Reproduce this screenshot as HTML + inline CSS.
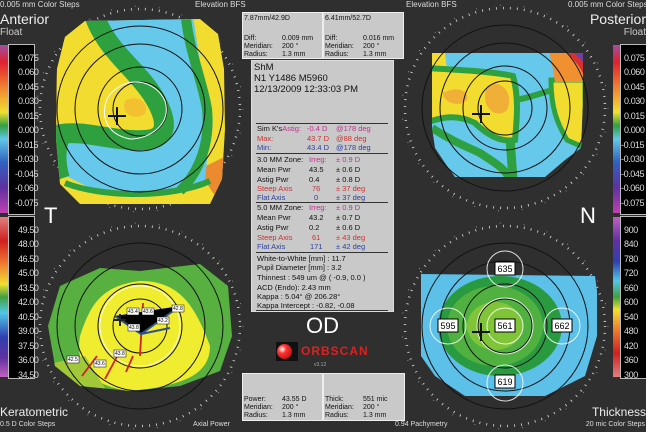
<!DOCTYPE html>
<html><head><meta charset="utf-8"><style>
body{margin:0;width:646px;height:432px;background:#2f2f2f;overflow:hidden;position:relative;font-family:"Liberation Sans",sans-serif;color:#fff}
.a{position:absolute;white-space:nowrap}
.box{position:absolute;background:#c9c9c9;border:1px solid #eee;color:#111;font-size:7px;line-height:8px}
.p{position:absolute;background:#c9c9c9;border:1px solid #ddd;color:#111}
.bar{position:absolute;background:#000;border:1px solid #bbb;font-size:9px;color:#ddd;letter-spacing:-0.4px}
.bar div{position:absolute;left:9px}
.r{color:#d03030}.b{color:#3040a0}.m{color:#c03090}
</style></head><body>
<svg width="646" height="432" style="position:absolute;left:0;top:0">
<defs>
<g id="ring" fill="none">
<circle r="100" stroke="#ddd" stroke-width="2.5" stroke-dasharray="0.8 6.2"/>
<circle r="103" stroke="#eee" stroke-width="1" stroke-dasharray="0.8 23.2" opacity=".6"/>
</g>
<g id="inner" fill="none" stroke="#111" stroke-width="1">
<circle r="27"/><circle r="42"/><circle r="65"/><circle r="83"/>
</g>
<clipPath id="c1"><path d="M-75,-72 L-55,-88 L60,-90 L78,-75 L84,-40 L85,20 L82,70 L70,95 L-60,95 L-80,75 L-84,30 L-83,-40 Z"/></clipPath>
<clipPath id="c2"><path d="M-73,-55 L78,-55 L78,-10 L76,40 L60,52 L40,69 L-50,69 L-60,55 L-70,40 L-73,20 Z"/></clipPath>
<clipPath id="c3"><path d="M-80,-40 L-40,-58 L0,-55 L60,-62 L88,-40 L92,10 L80,45 L40,60 L-10,65 L-60,60 L-85,40 L-92,0 Z"/></clipPath>
<clipPath id="c4"><path d="M-84,-52 L90,-50 L92,-35 L92,10 L80,50 L40,70 L-40,70 L-70,50 L-84,30 Z"/></clipPath>
</defs>
<!-- TL -->
<g transform="translate(140,109)">
<use href="#ring"/>
<g clip-path="url(#c1)">
<rect x="-100" y="-100" width="200" height="200" fill="#f2dc30"/>
<path d="M-90,-80 C-80,-40 -78,0 -90,20 L-100,20 L-100,-80 Z" fill="#f0a030"/>
<path d="M60,60 C70,80 75,95 100,100 L100,40 Z" fill="#ec8a30"/>
<path d="M-52,-100 L52,-100 L70,20 L65,72 L30,84 L-40,84 L-72,68 L-78,20 Z" fill="#66c8ea"/>
<path d="M45,-100 C48,-60 62,-30 67,0 C70,30 62,60 40,82" fill="none" stroke="#2ea040" stroke-width="10"/>
<path d="M-100,-100 L-55,-100 C-45,-60 -10,-40 5,-12 C18,10 18,22 5,24 C-20,26 -55,12 -100,14 Z" fill="#f2dc30"/>
<path d="M-48,-100 C-36,-60 -8,-45 12,-15 C28,10 30,30 5,31 C-25,33 -55,21 -78,25 C-85,35 -85,55 -80,70" fill="none" stroke="#2ea040" stroke-width="20"/>
<path d="M-75,74 C-40,88 30,90 70,72" fill="none" stroke="#2ea040" stroke-width="6"/>
<path d="M-15,-8 C-5,-15 10,-8 5,5 C-5,12 -20,5 -15,-8 Z" fill="#f2c030"/>
</g>
<use href="#inner"/>
<path d="M-32,-12 C-15,-35 15,-30 25,-8 C32,15 10,30 -10,30 C-35,25 -40,5 -32,-12 Z" fill="none" stroke="#fff" stroke-width="1"/>
<path d="M-32,7 h18 M-23,-2 v18" stroke="#111" stroke-width="2"/>
</g>
<!-- TR -->
<g transform="translate(505,108)">
<use href="#ring"/>
<g clip-path="url(#c2)">
<rect x="-100" y="-100" width="200" height="200" fill="#66c8ea"/>
<path d="M-73,-55 L-60,-55 L-58,-38 L-73,-36 Z" fill="#f2dc30"/>
<path d="M-73,20 C-50,35 -35,40 -25,45 C-10,55 0,60 5,72" fill="none" stroke="#2ea040" stroke-width="8"/>
<path d="M5,30 L8,72" fill="none" stroke="#2ea040" stroke-width="9"/>
<path d="M10,-8 C25,-10 35,-15 48,-18" fill="none" stroke="#2ea040" stroke-width="6"/>
<path d="M-80,-40 C-40,-38 -10,-36 8,-32 C14,-10 12,10 10,32 C-5,35 -20,25 -30,15 C-50,5 -65,10 -80,15 Z" fill="#f2dc30" stroke="#2ea040" stroke-width="6"/>
<path d="M-62,-15 C-50,-22 -35,-18 -38,-8 C-45,0 -62,-5 -62,-15 Z" fill="#f0b038"/>
<path d="M-18,-22 C-5,-30 10,-15 2,2 C-8,12 -26,0 -18,-22 Z" fill="#f0b038"/>
<path d="M46,-28 L80,-28 L80,40 L62,32 C52,15 46,0 46,-28 Z" fill="#f2dc30" stroke="#2ea040" stroke-width="5"/>
<path d="M44,-56 L80,-56 L80,-26 L50,-26 C48,-40 46,-50 44,-56 Z" fill="#f09030"/>
<path d="M60,-56 L80,-56 L80,-30 C75,-42 68,-50 60,-56 Z" fill="#d83030"/>
<path d="M68,-56 L80,-56 L80,-44 Z" fill="#7040a0"/>
</g>
<use href="#inner"/>
<path d="M-33,6 h18 M-24,-3 v18" stroke="#111" stroke-width="2"/>
</g>
<!-- BL -->
<g transform="translate(140,326)">
<use href="#ring"/>
<g clip-path="url(#c3)">
<rect x="-100" y="-100" width="200" height="200" fill="#58b040"/>
<path d="M-60,10 C-50,-20 -40,-40 0,-45 C40,-45 55,-20 70,20 C70,50 40,60 -10,65 C-50,60 -65,40 -60,10 Z" fill="#f0ec30"/>
<path d="M-100,40 L-55,30 L-30,70 L-100,70 Z" fill="#a0c838"/>
</g>
<use href="#inner"/>
<circle r="40" fill="none" stroke="#fff" stroke-width="1" opacity=".8"/>
<path d="M3,-23 L0,30 M-43,30 L-58,50 M-20,25 L-35,53 M-7,30 L-14,46" stroke="#d02020" stroke-width="1.8"/>
<path d="M-25,-10 L1,8 L40,-20 M1,8 L30,2" stroke="#305090" stroke-width="2"/>
<path d="M-26,-6 h12 M-20,-12 v12" stroke="#222" stroke-width="2"/>
<g font-size="5" font-family="Liberation Sans" fill="#000">
<rect x="-13" y="-18" width="12" height="7" fill="#fff" stroke="#000" stroke-width=".5"/><text x="-12" y="-13">43.4</text>
<rect x="2" y="-18" width="12" height="7" fill="#fff" stroke="#000" stroke-width=".5"/><text x="3" y="-13">43.6</text>
<rect x="17" y="-9" width="12" height="7" fill="#fff" stroke="#000" stroke-width=".5"/><text x="18" y="-4">43.2</text>
<rect x="32" y="-21" width="12" height="7" fill="#fff" stroke="#000" stroke-width=".5"/><text x="33" y="-16">42.8</text>
<rect x="-12" y="-2" width="12" height="7" fill="#fff" stroke="#000" stroke-width=".5"/><text x="-11" y="3">43.8</text>
<rect x="-26" y="24" width="12" height="7" fill="#fff" stroke="#000" stroke-width=".5"/><text x="-25" y="29">43.8</text>
<rect x="-46" y="34" width="12" height="7" fill="#fff" stroke="#000" stroke-width=".5"/><text x="-45" y="39">43.6</text>
<rect x="-73" y="30" width="12" height="7" fill="#fff" stroke="#000" stroke-width=".5"/><text x="-72" y="35">42.5</text>
</g>
</g>
<!-- BR -->
<g transform="translate(505,326)">
<use href="#ring"/>
<g clip-path="url(#c4)">
<rect x="-100" y="-100" width="200" height="200" fill="#5cc0e8"/>
<ellipse cx="-5" cy="0" rx="62" ry="50" fill="#2a9a40"/>
<ellipse cx="-10" cy="0" rx="48" ry="40" fill="#50b040"/>
<ellipse cx="-10" cy="0" rx="28" ry="24" fill="#80c438"/>
</g>
<use href="#inner"/>
<g fill="none" stroke="#fff" stroke-width="1" opacity=".85">
<circle cx="0" cy="-57" r="18"/><circle cx="-57" cy="0" r="18"/><circle cx="57" cy="0" r="18"/><circle cx="0" cy="57" r="18"/><circle r="18"/><circle r="28"/>
</g>
<path d="M-33,6 h18 M-24,-3 v18" stroke="#111" stroke-width="2"/>
<g font-size="9" font-family="Liberation Sans" fill="#000" text-anchor="middle">
<rect x="-10" y="-64" width="20" height="13" fill="#fff" stroke="#000"/><text x="0" y="-54">635</text>
<rect x="-67" y="-7" width="20" height="13" fill="#fff" stroke="#000"/><text x="-57" y="3">595</text>
<rect x="-10" y="-7" width="20" height="13" fill="#fff" stroke="#000"/><text x="0" y="3">561</text>
<rect x="47" y="-7" width="20" height="13" fill="#fff" stroke="#000"/><text x="57" y="3">662</text>
<rect x="-10" y="49" width="20" height="13" fill="#fff" stroke="#000"/><text x="0" y="59">619</text>
</g>
</g>
<defs>
<linearGradient id="g1" x1="0" y1="0" x2="0" y2="1">
<stop offset="0" stop-color="#a050a0"/><stop offset=".1" stop-color="#e02030"/><stop offset=".25" stop-color="#f08030"/><stop offset=".4" stop-color="#f0e030"/><stop offset=".48" stop-color="#30a040"/><stop offset=".56" stop-color="#60c8e8"/><stop offset=".7" stop-color="#3060c0"/><stop offset=".85" stop-color="#6030a0"/><stop offset="1" stop-color="#c040b0"/>
</linearGradient>
<linearGradient id="g2" x1="0" y1="0" x2="0" y2="1">
<stop offset="0" stop-color="#e08080"/><stop offset=".15" stop-color="#d02020"/><stop offset=".3" stop-color="#f08030"/><stop offset=".42" stop-color="#f0e030"/><stop offset=".5" stop-color="#40a040"/><stop offset=".6" stop-color="#50c8e8"/><stop offset=".75" stop-color="#3040b0"/><stop offset=".88" stop-color="#6030a0"/><stop offset="1" stop-color="#c060c0"/>
</linearGradient>
<linearGradient id="g3" x1="0" y1="0" x2="0" y2="1">
<stop offset="0" stop-color="#c060c0"/><stop offset=".15" stop-color="#6030a0"/><stop offset=".28" stop-color="#3040b0"/><stop offset=".4" stop-color="#50c8e8"/><stop offset=".5" stop-color="#40a040"/><stop offset=".58" stop-color="#f0e030"/><stop offset=".7" stop-color="#f08030"/><stop offset=".85" stop-color="#d02020"/><stop offset="1" stop-color="#e08080"/>
</linearGradient>
</defs>
<rect x="0" y="45" width="8" height="168" fill="url(#g1)"/>
<rect x="0" y="217" width="8" height="160" fill="url(#g2)"/>
<rect x="613" y="45" width="8" height="168" fill="url(#g1)"/>
<rect x="613" y="217" width="8" height="160" fill="url(#g3)"/>
</svg>

<div class="a" style="left:0;top:0;font-size:8px;color:#ddd">0.005 mm Color Steps</div>
<div class="a" style="left:195px;top:0;font-size:8px;color:#ddd">Elevation BFS</div>
<div class="a" style="left:406px;top:0;font-size:8px;color:#ddd">Elevation BFS</div>
<div class="a" style="left:568px;top:0;font-size:8px;color:#ddd">0.005 mm Color Steps</div>
<div class="a" style="left:0;top:11px;font-size:14px;color:#eee">Anterior</div>
<div class="a" style="left:0;top:27px;font-size:10px;color:#ccc">Float</div>
<div class="a" style="right:0;top:11px;font-size:14px;color:#eee">Posterior</div>
<div class="a" style="right:0;top:27px;font-size:10px;color:#ccc">Float</div>
<div class="a" style="left:44px;top:203px;font-size:22px;color:#fff">T</div>
<div class="a" style="left:580px;top:203px;font-size:22px;color:#fff">N</div>
<div class="a" style="left:0;top:405px;font-size:12px;color:#eee">Keratometric</div>
<div class="a" style="left:0;top:421px;font-size:7px;color:#ddd">0.5 D Color Steps</div>
<div class="a" style="left:193px;top:421px;font-size:7px;color:#ddd">Axial Power</div>
<div class="a" style="left:395px;top:421px;font-size:7px;color:#ddd">0.94 Pachymetry</div>
<div class="a" style="right:0;top:405px;font-size:12px;color:#eee">Thickness</div>
<div class="a" style="right:1px;top:421px;font-size:7px;color:#ddd">20 mic Color Steps</div>

<div class="bar" style="left:8px;top:44px;width:25px;height:169px">
<div style="top:8px">0.075</div><div style="top:22px">0.060</div><div style="top:37px">0.045</div><div style="top:51px">0.030</div><div style="top:66px">0.015</div><div style="top:80px">0.000</div><div style="top:95px;left:6px">-0.015</div><div style="top:109px;left:6px">-0.030</div><div style="top:124px;left:6px">-0.045</div><div style="top:138px;left:6px">-0.060</div><div style="top:153px;left:6px">-0.075</div>
</div>
<div class="bar" style="left:8px;top:216px;width:25px;height:161px">
<div style="top:8px">49.50</div><div style="top:22px">48.00</div><div style="top:37px">46.50</div><div style="top:51px">45.00</div><div style="top:66px">43.50</div><div style="top:80px">42.00</div><div style="top:95px">40.50</div><div style="top:109px">39.00</div><div style="top:124px">37.50</div><div style="top:138px">36.00</div><div style="top:153px">34.50</div>
</div>
<div class="bar" style="left:620px;top:44px;width:26px;height:169px">
<div style="top:8px;left:3px">0.075</div><div style="top:22px;left:3px">0.060</div><div style="top:37px;left:3px">0.045</div><div style="top:51px;left:3px">0.030</div><div style="top:66px;left:3px">0.015</div><div style="top:80px;left:3px">0.000</div><div style="top:95px;left:0">-0.015</div><div style="top:109px;left:0">-0.030</div><div style="top:124px;left:0">-0.045</div><div style="top:138px;left:0">-0.060</div><div style="top:153px;left:0">-0.075</div>
</div>
<div class="bar" style="left:620px;top:216px;width:26px;height:161px">
<div style="top:8px;left:3px">900</div><div style="top:22px;left:3px">840</div><div style="top:37px;left:3px">780</div><div style="top:51px;left:3px">720</div><div style="top:66px;left:3px">660</div><div style="top:80px;left:3px">600</div><div style="top:95px;left:3px">540</div><div style="top:109px;left:3px">480</div><div style="top:124px;left:3px">420</div><div style="top:138px;left:3px">360</div><div style="top:153px;left:3px">300</div>
</div>

<div class="box" style="left:242px;top:12px;width:79px;height:45px">
<div class="a" style="left:1px;top:2px">7.87mm/42.9D</div>
<div class="a" style="left:1px;top:22px">Diff:</div><div class="a" style="left:39px;top:22px">0.009 mm</div>
<div class="a" style="left:1px;top:30px">Meridian:</div><div class="a" style="left:39px;top:30px">200 °</div>
<div class="a" style="left:1px;top:38px">Radius:</div><div class="a" style="left:39px;top:38px">1.3 mm</div>
</div>
<div class="box" style="left:323px;top:12px;width:79px;height:45px">
<div class="a" style="left:1px;top:2px">6.41mm/52.7D</div>
<div class="a" style="left:1px;top:22px">Diff:</div><div class="a" style="left:39px;top:22px">0.016 mm</div>
<div class="a" style="left:1px;top:30px">Meridian:</div><div class="a" style="left:39px;top:30px">200 °</div>
<div class="a" style="left:1px;top:38px">Radius:</div><div class="a" style="left:39px;top:38px">1.3 mm</div>
</div>

<div class="p" style="left:251px;top:60px;width:141px;height:250px;font-size:7.5px;line-height:9px">
<div class="a" style="left:2px;top:1px;font-size:9.5px;line-height:11px">ShM<br>N1 Y1486 M5960<br>12/13/2009 12:33:03 PM</div>
<div class="a" style="left:4px;top:62px;width:132px;border-top:1px solid #333"></div>
<div class="a" style="left:5px;top:63px">Sim K's<span class="m">Astig:</span></div><div class="a m" style="left:55px;top:63px">-0.4 D</div><div class="a m" style="left:84px;top:63px">@178 deg</div>
<div class="a r" style="left:5px;top:73px">Max:</div><div class="a r" style="left:55px;top:73px">43.7 D</div><div class="a r" style="left:84px;top:73px">@88 deg</div>
<div class="a b" style="left:5px;top:82px">Min:</div><div class="a b" style="left:55px;top:82px">43.4 D</div><div class="a b" style="left:84px;top:82px">@178 deg</div>
<div class="a" style="left:4px;top:92px;width:132px;border-top:1px solid #333"></div>
<div class="a" style="left:5px;top:94px">3.0 MM Zone:</div><div class="a m" style="left:57px;top:94px">Irreg:</div><div class="a m" style="left:84px;top:94px">± 0.9 D</div>
<div class="a" style="left:5px;top:104px">Mean Pwr</div><div class="a" style="left:57px;top:104px">43.5</div><div class="a" style="left:84px;top:104px">± 0.6 D</div>
<div class="a" style="left:5px;top:114px">Astig Pwr</div><div class="a" style="left:57px;top:114px">0.4</div><div class="a" style="left:84px;top:114px">± 0.8 D</div>
<div class="a r" style="left:5px;top:123px">Steep Axis</div><div class="a r" style="left:60px;top:123px">76</div><div class="a r" style="left:84px;top:123px">± 37 deg</div>
<div class="a b" style="left:5px;top:132px">Flat Axis</div><div class="a b" style="left:62px;top:132px">0</div><div class="a b" style="left:84px;top:132px">± 37 deg</div>
<div class="a" style="left:4px;top:141px;width:132px;border-top:1px solid #333"></div>
<div class="a" style="left:5px;top:142px">5.0 MM Zone:</div><div class="a m" style="left:57px;top:142px">Irreg:</div><div class="a m" style="left:84px;top:142px">± 0.9 D</div>
<div class="a" style="left:5px;top:152px">Mean Pwr</div><div class="a" style="left:57px;top:152px">43.2</div><div class="a" style="left:84px;top:152px">± 0.7 D</div>
<div class="a" style="left:5px;top:162px">Astig Pwr</div><div class="a" style="left:57px;top:162px">0.2</div><div class="a" style="left:84px;top:162px">± 0.6 D</div>
<div class="a r" style="left:5px;top:172px">Steep Axis</div><div class="a r" style="left:60px;top:172px">61</div><div class="a r" style="left:84px;top:172px">± 43 deg</div>
<div class="a b" style="left:5px;top:181px">Flat Axis</div><div class="a b" style="left:58px;top:181px">171</div><div class="a b" style="left:84px;top:181px">± 42 deg</div>
<div class="a" style="left:4px;top:191px;width:132px;border-top:1px solid #333"></div>
<div class="a" style="left:5px;top:193px">White-to-White [mm] : 11.7</div>
<div class="a" style="left:5px;top:202px">Pupil Diameter [mm] :  3.2</div>
<div class="a" style="left:5px;top:212px">Thinnest : 549 um @ ( -0.9, 0.0 )</div>
<div class="a" style="left:5px;top:222px">ACD (Endo): 2.43 mm</div>
<div class="a" style="left:5px;top:231px">Kappa : 5.04° @ 206.28°</div>
<div class="a" style="left:5px;top:240px">Kappa Intercept : -0.82, -0.08</div>
<div class="a" style="left:4px;top:249px;width:132px;border-top:1px solid #333"></div>
</div>

<div class="a" style="left:306px;top:313px;font-size:22px;color:#fff">OD</div>
<div class="a" style="left:276px;top:342px;width:22px;height:19px;background:#111"></div>
<div class="a" style="left:277px;top:344px;width:15px;height:15px;border-radius:50%;background:radial-gradient(circle at 35% 35%,#fff 0,#f33 30%,#a00 100%)"></div>
<div class="a" style="left:301px;top:344px;font-size:12px;font-weight:bold;color:#e02020;letter-spacing:1px">ORBSCAN</div>
<div class="a" style="left:314px;top:362px;font-size:5px;color:#aaa">v3.12</div>

<div class="box" style="left:242px;top:373px;width:79px;height:46px">
<div class="a" style="left:1px;top:22px">Power:</div><div class="a" style="left:39px;top:22px">43.55 D</div>
<div class="a" style="left:1px;top:30px">Meridian:</div><div class="a" style="left:39px;top:30px">200 °</div>
<div class="a" style="left:1px;top:38px">Radius:</div><div class="a" style="left:39px;top:38px">1.3 mm</div>
</div>
<div class="box" style="left:323px;top:373px;width:80px;height:46px">
<div class="a" style="left:1px;top:22px">Thick:</div><div class="a" style="left:39px;top:22px">551 mic</div>
<div class="a" style="left:1px;top:30px">Meridian:</div><div class="a" style="left:39px;top:30px">200 °</div>
<div class="a" style="left:1px;top:38px">Radius:</div><div class="a" style="left:39px;top:38px">1.3 mm</div>
</div>
</body></html>
